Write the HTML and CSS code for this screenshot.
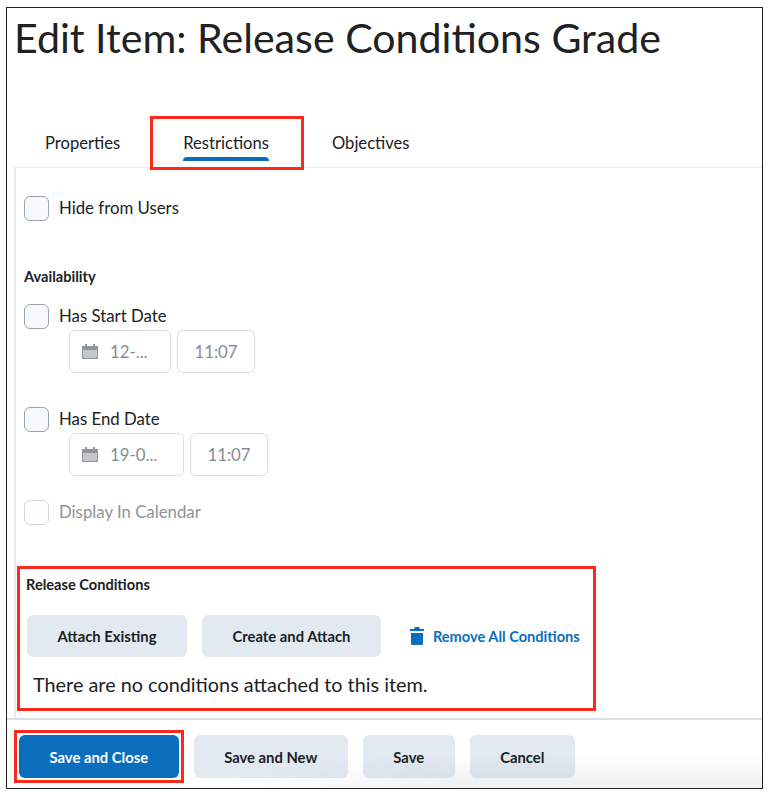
FILE: index.html
```html
<!doctype HTML>
<html>
    <head>
        <title>Edit Item: Release Conditions Grade</title>
        <meta content="text/html;charset=utf-8" http-equiv="Content-Type">
        <link rel="stylesheet" href="styles.css">
    </head>

    <body>
        <div class="frame">
            <h1 class="title">Edit Item: Release Conditions Grade</h1>

            <nav class="tabs">
                <span class="tab">Properties</span>
                <span class="tab active">Restrictions<i class="callout callout-tab"></i></span>
                <span class="tab">Objectives</span>
            </nav>

            <section class="panel">
                <label class="check hide-users"><span class="box"></span>Hide from Users</label>

                <h2 class="label availability">Availability</h2>

                <label class="check"><span class="box"></span>Has Start Date</label>
                <div class="dates first">
                    <div class="field date short">
                        <svg class="cal" viewBox="0 0 16 16"><path d="M3 0h2v2h6V0h2v2h3v13H0V2h3zM1.500 6v7.500h13V6z" fill="#8f959b"/><path d="M1.500 6h13v7.500h-13z" fill="#c3c7cb"/></svg>
                        12-...
                    </div>
                    <div class="field time">11:07</div>
                </div>

                <label class="check end-date"><span class="box"></span>Has End Date</label>
                <div class="dates second">
                    <div class="field date long">
                        <svg class="cal" viewBox="0 0 16 16"><path d="M3 0h2v2h6V0h2v2h3v13H0V2h3zM1.500 6v7.500h13V6z" fill="#8f959b"/><path d="M1.500 6h13v7.500h-13z" fill="#c3c7cb"/></svg>
                        19-0...
                    </div>
                    <div class="field time">11:07</div>
                </div>

                <label class="check disabled"><span class="box"></span>Display In Calendar</label>

                <div class="release">
                    <i class="callout callout-release"></i>
                    <h2 class="label">Release Conditions</h2>
                    <div class="actions">
                        <button class="btn">Attach Existing</button>
                        <button class="btn">Create and Attach</button>
                        <a class="remove" href="#">
                            <svg class="trash" viewBox="0 0 14 18"><path d="M5 0h4l1 2h4v2H0V2h4zM1 6h12v10.500a1.500 1.500 0 0 1-1.500 1.500h-9A1.500 1.500 0 0 1 1 16.500z" fill="#0a6ebd"/></svg>
                            Remove All Conditions
                        </a>
                    </div>
                    <p class="empty">There are no conditions attached to this item.</p>
                </div>
            </section>

            <footer class="footer">
                <button class="btn primary">Save and Close<i class="callout callout-save"></i></button>
                <button class="btn">Save and New</button>
                <button class="btn">Save</button>
                <button class="btn">Cancel</button>
            </footer>
        </div>
    </body>
</html>
```

FILE: styles.css
```css
html {
    background: #fff;
    color: #202122;
    font-family: Lato, "Open Sans", sans-serif;
}

body {
    margin: 7px 8px 0 6px;
}

.frame {
    box-sizing: border-box;
    width: 757px;
    height: 782px;
    border: 1px solid #222;
    display: flex;
    flex-direction: column;
}

.title {
    margin: 0;
    padding: 5px 0 0 7px;
    height: 88px;
    box-sizing: border-box;
    font-size: 41.150px;
    line-height: 48px;
    font-weight: normal;
}

.tabs {
    display: flex;
    gap: 63px;
    padding-left: 38px;
    height: 71px;
    box-sizing: border-box;
}

.tab {
    position: relative;
    font-size: 16.600px;
    line-height: 22px;
    padding-top: 36px;
}

.tab.active::after {
    content: "";
    position: absolute;
    left: 0;
    right: 0;
    top: 61px;
    height: 4px;
    border-radius: 4px 4px 0 0;
    background: #0a6ebd;
}

.callout {
    position: absolute;
    box-sizing: border-box;
    border: 3px solid #fb2a1c;
    pointer-events: none;
}

.callout-tab {
    left: -33px;
    top: 20px;
    width: 154px;
    height: 54px;
}

.callout-release {
    left: 0;
    top: 0;
    width: 579px;
    height: 145px;
}

.callout-save {
    left: -5px;
    top: -5px;
    width: 170px;
    height: 53px;
}

.panel {
    flex: 1;
    min-height: 0;
    margin-left: 7px;
    border-left: 2px solid #e9edf1;
    border-top: 1px solid #e9edf1;
    padding-left: 8px;
}

.check {
    display: flex;
    align-items: center;
    gap: 10px;
    font-size: 16.800px;
    line-height: 24px;
}

.box {
    box-sizing: border-box;
    width: 25px;
    height: 25px;
    margin-top: 2px;
    border: 1px solid #9ca3ab;
    border-radius: 6px;
    background: #f6fafe;
}

.hide-users {
    margin-top: 26px;
}

.label {
    margin: 0;
    font-size: 14.600px;
    line-height: 18px;
    font-weight: bold;
}

.availability {
    margin-top: 47px;
    margin-bottom: 16px;
}

.dates {
    display: flex;
    gap: 6px;
    margin-left: 45px;
}

.first {
    margin-top: 1px;
    margin-bottom: 32px;
}

.second {
    margin-top: 1px;
    margin-bottom: 22px;
}

.field {
    box-sizing: border-box;
    height: 43px;
    border: 1px solid #d9dde2;
    border-radius: 6px;
    display: flex;
    align-items: center;
    font-size: 16.800px;
    color: #868c93;
}

.date {
    padding-left: 12px;
    gap: 12px;
}

.short {
    width: 102px;
}

.long {
    width: 115px;
}

.time {
    width: 78px;
    justify-content: center;
}

.cal {
    width: 16px;
    height: 16px;
}

.disabled {
    color: #8f9499;
}

.disabled .box {
    border-color: #d5d9dd;
    background: #fdfeff;
}

.release {
    position: relative;
    margin: 41px 0 0 -7px;
    padding-left: 9px;
    height: 145px;
}

.release .label {
    padding-top: 10px;
}

.actions {
    display: flex;
    align-items: center;
    gap: 15px;
    margin: 21px 0 0 1px;
}

.btn {
    position: relative;
    height: 43px;
    padding: 0 30.500px;
    border: 0;
    border-radius: 6px;
    background: #e3e9f1;
    color: #202122;
    font-family: inherit;
    font-size: 14.800px;
    font-weight: bold;
}

.actions .btn {
    height: 42px;
}

.remove {
    display: flex;
    align-items: center;
    gap: 9px;
    margin-left: 14px;
    color: #0a6ebd;
    font-size: 14.600px;
    font-weight: bold;
    text-decoration: none;
}

.trash {
    width: 14px;
    height: 18px;
}

.empty {
    margin: 13px 0 0 7px;
    font-size: 19.850px;
    line-height: 28px;
}

.footer {
    position: relative;
    display: flex;
    gap: 15px;
    padding: 15px 0 0 12px;
    height: 70px;
    flex: none;
    box-sizing: border-box;
    border-top: 2px solid #dde0e3;
}

/* fade over the lower right of the button bar */
.footer::after {
    content: "";
    position: absolute;
    left: 0;
    right: 0;
    bottom: 0;
    height: 34px;
    background: linear-gradient(rgba(90, 100, 115, 0), rgba(90, 100, 115, 0.1));
    -webkit-mask-image: linear-gradient(90deg, transparent 30%, #000 60%);
    mask-image: linear-gradient(90deg, transparent 30%, #000 60%);
}

.primary {
    background: #0a6ebd;
    color: #fff;
}
```
